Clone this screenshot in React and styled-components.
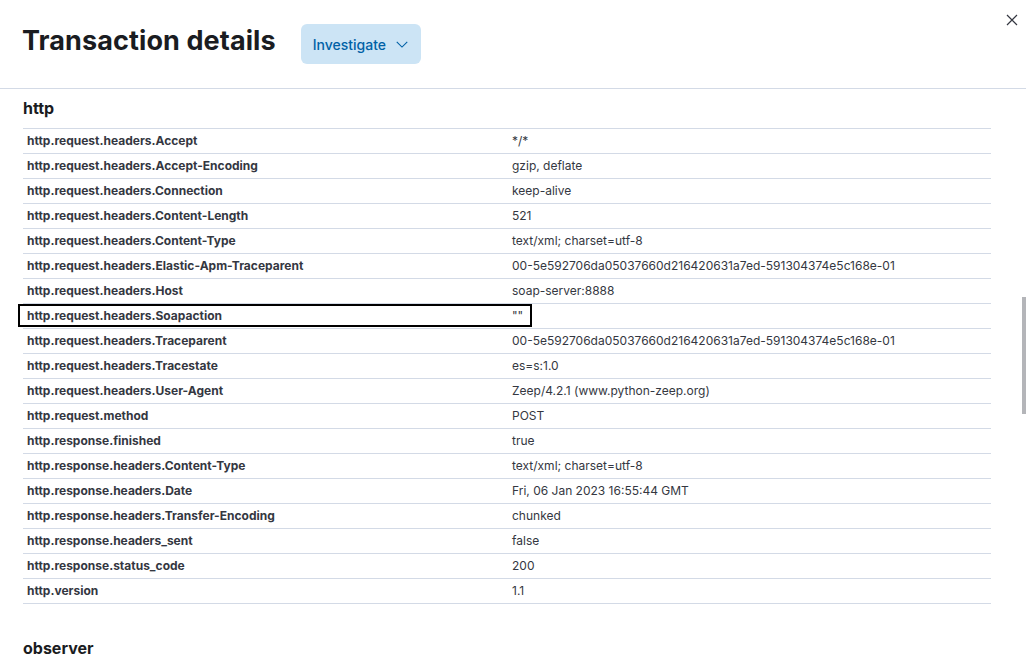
import React from "react";
import styled, { createGlobalStyle } from "styled-components";

const Global = createGlobalStyle`
  html, body { margin: 0; padding: 0; background: #fff; overflow: hidden; }
  body { font-family: Inter, "Noto Sans", sans-serif; color: #343741; }
`;

const Flyout = styled.div`
  position: relative;
  width: 1026px;
  height: 664px;
  overflow: hidden;
  background: #fff;
`;

const Header = styled.header`
  display: flex;
  align-items: center;
  gap: 25px;
  height: 89px;
  box-sizing: border-box;
  padding: 0 24px 0 22px;
  border-bottom: 1px solid #d3dae6;
`;

const Title = styled.h1`
  margin: 0 0 7px;
  font-size: 27px;
  font-weight: 700;
  color: #1a1c21;
  letter-spacing: 0.1px;
`;

const InvestigateButton = styled.button`
  display: flex;
  align-items: center;
  gap: 9px;
  height: 40px;
  padding: 0 12px;
  border: none;
  border-radius: 6px;
  background: #cce4f5;
  color: #0061a6;
  font-family: inherit;
  font-size: 14px;
  font-weight: 500;
`;

const CloseButton = styled.button`
  position: absolute;
  top: 12px;
  right: 6px;
  width: 16px;
  height: 16px;
  padding: 0;
  border: none;
  background: none;
`;

const Body = styled.div`
  padding: 0 35px 0 23px;
`;

const SectionTitle = styled.h2`
  margin: 0;
  padding: ${(p) => p.$top}px 0 0;
  height: ${(p) => p.$height}px;
  box-sizing: border-box;
  font-size: 16px;
  font-weight: 700;
  color: #1a1c21;
`;

const Table = styled.div`
  border-top: 1px solid #d3dae6;
`;

const Row = styled.div`
  display: grid;
  grid-template-columns: 485px 1fr;
  height: 25px;
  box-sizing: border-box;
  border-bottom: 1px solid #d3dae6;
  position: relative;
`;

const Key = styled.div`
  padding: 0 4px 2px;
  display: flex;
  align-items: center;
  font-size: 12px;
  font-weight: 700;
  color: #343741;
`;

const Value = styled.div`
  padding: 0 4px 2px;
  display: flex;
  align-items: center;
  font-size: 12px;
  color: #343741;
`;

const FocusRing = styled.div`
  position: absolute;
  left: -5px;
  top: 0;
  width: 514px;
  height: 23px;
  box-sizing: border-box;
  border: 2px solid #000;
  pointer-events: none;
`;

const ScrollThumb = styled.div`
  position: absolute;
  right: 0;
  top: 297px;
  width: 4px;
  height: 117px;
  background: #b4b5b9;
`;

const rows = [
  ["http.request.headers.Accept", "*/*"],
  ["http.request.headers.Accept-Encoding", "gzip, deflate"],
  ["http.request.headers.Connection", "keep-alive"],
  ["http.request.headers.Content-Length", "521"],
  ["http.request.headers.Content-Type", "text/xml; charset=utf-8"],
  ["http.request.headers.Elastic-Apm-Traceparent", "00-5e592706da05037660d216420631a7ed-591304374e5c168e-01"],
  ["http.request.headers.Host", "soap-server:8888"],
  ["http.request.headers.Soapaction", '""', true],
  ["http.request.headers.Traceparent", "00-5e592706da05037660d216420631a7ed-591304374e5c168e-01"],
  ["http.request.headers.Tracestate", "es=s:1.0"],
  ["http.request.headers.User-Agent", "Zeep/4.2.1 (www.python-zeep.org)"],
  ["http.request.method", "POST"],
  ["http.response.finished", "true"],
  ["http.response.headers.Content-Type", "text/xml; charset=utf-8"],
  ["http.response.headers.Date", "Fri, 06 Jan 2023 16:55:44 GMT"],
  ["http.response.headers.Transfer-Encoding", "chunked"],
  ["http.response.headers_sent", "false"],
  ["http.response.status_code", "200"],
  ["http.version", "1.1"],
];

export default function App() {
  return (
    <>
      <Global />
      <Flyout>
        <CloseButton aria-label="Close">
          <svg width="16" height="16" viewBox="0 0 16 16">
            <path d="M3 3l10 10M13 3L3 13" stroke="#343741" strokeWidth="1.2" fill="none" />
          </svg>
        </CloseButton>
        <Header>
          <Title>Transaction details</Title>
          <InvestigateButton>
            Investigate
            <svg width="14" height="14" viewBox="0 0 16 16">
              <path d="M2 5.5l6 6 6-6" stroke="#0061a6" strokeWidth="1.3" fill="none" />
            </svg>
          </InvestigateButton>
        </Header>
        <Body>
          <SectionTitle $top={9} $height={39}>http</SectionTitle>
          <Table>
            {rows.map(([k, v, focused]) => (
              <Row key={k}>
                <Key>{k}</Key>
                <Value>{v}</Value>
                {focused && <FocusRing />}
              </Row>
            ))}
          </Table>
          <SectionTitle $top={34} $height={60}>observer</SectionTitle>
        </Body>
        <ScrollThumb />
      </Flyout>
    </>
  );
}
